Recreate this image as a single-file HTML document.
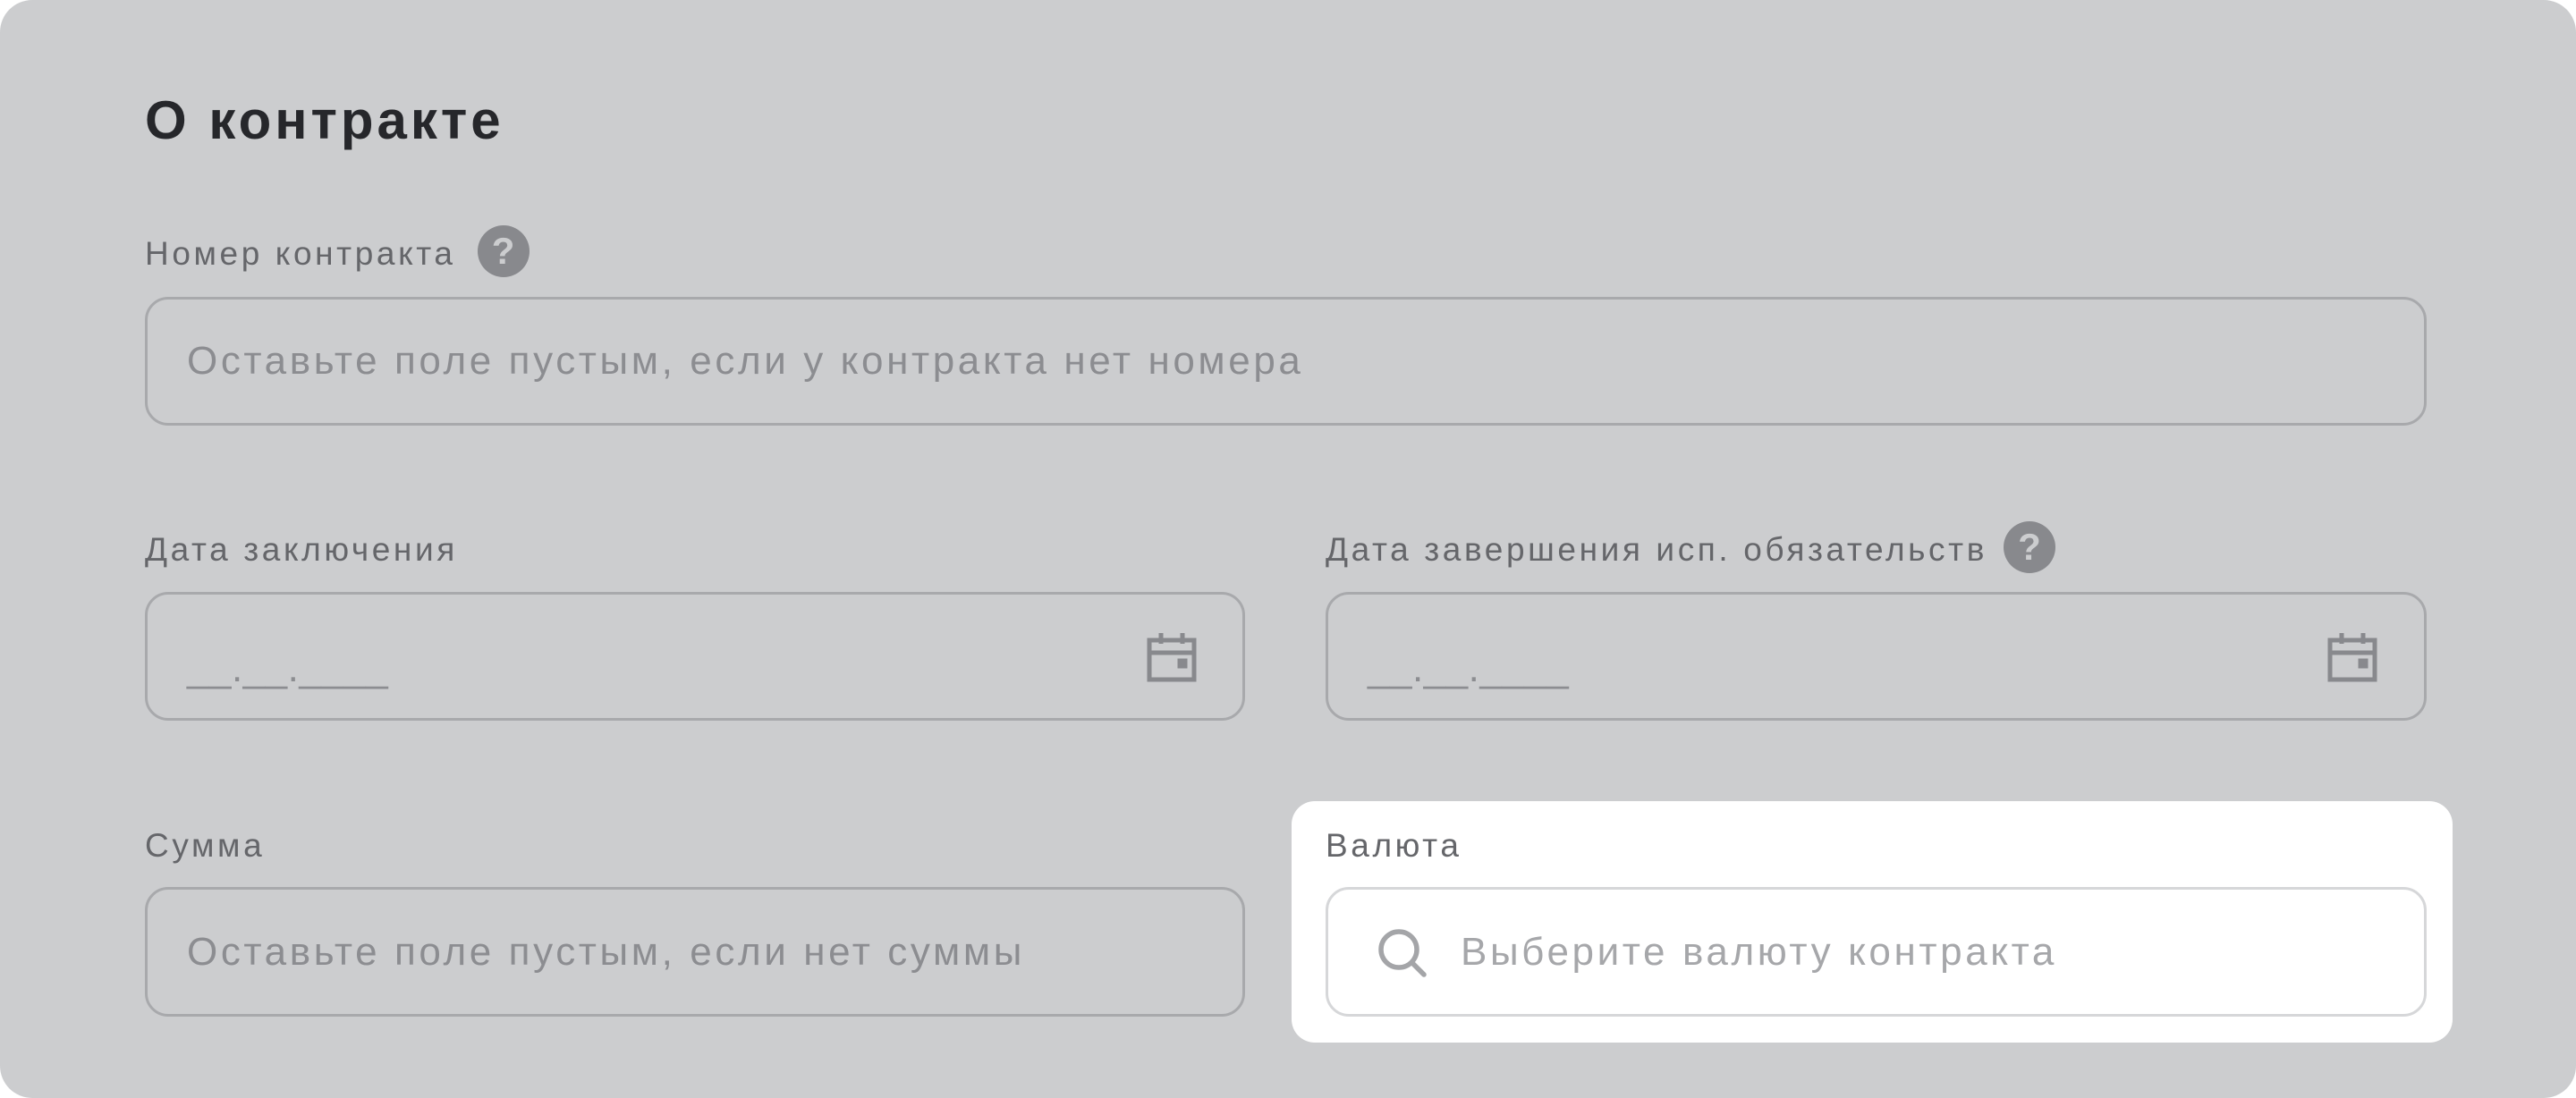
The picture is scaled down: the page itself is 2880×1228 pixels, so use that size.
<!DOCTYPE html>
<html><head><meta charset="utf-8"><style>
*{margin:0;padding:0;box-sizing:border-box}
body{width:2880px;height:1228px;background:#fff;font-family:"Liberation Sans",sans-serif;overflow:hidden;position:relative}
.card{position:absolute;left:0;top:0;width:2880px;height:1228px;background:#cccdcf;border-radius:36px}
.abs{position:absolute}
h1{position:absolute;left:162px;top:100px;font-size:60px;font-weight:bold;color:#26272b;letter-spacing:4px}
.lbl{position:absolute;font-size:37px;color:#65666a;line-height:44px;letter-spacing:3.6px;white-space:nowrap}
.inp{position:absolute;border:3px solid #a8a9ac;border-radius:26px}
.ph{position:absolute;font-size:44px;color:#8c8d91;line-height:52px;letter-spacing:3.6px;white-space:nowrap}
.q{display:inline-block;vertical-align:middle;margin-left:24px;margin-top:-10px;width:58px;height:58px;border-radius:50%;background:#88898d;color:#cccdcf;font-weight:bold;font-size:42px;text-align:center;line-height:58px;letter-spacing:0}
.hl{position:absolute;left:1444px;top:896px;width:1298px;height:270px;background:#fff;border-radius:26px}
</style></head><body>
<div class="card"></div>
<h1>О контракте</h1>
<div class="lbl" style="left:162px;top:262px">Номер контракта<span class="q">?</span></div>
<div class="inp" style="left:162px;top:332px;width:2551px;height:144px"></div>
<div class="ph" style="left:209px;top:378px">Оставьте поле пустым, если у контракта нет номера</div>

<div class="lbl" style="left:162px;top:593px">Дата заключения</div>
<div class="lbl" style="left:1482px;top:593px">Дата завершения исп. обязательств<span class="q" style="margin-left:18px">?</span></div>
<div class="inp" style="left:162px;top:662px;width:1230px;height:144px"></div>
<div class="inp" style="left:1482px;top:662px;width:1231px;height:144px"></div>
<div class="ph" style="left:209px;top:722px;letter-spacing:0.5px">__.__.____</div>
<div class="ph" style="left:1529px;top:722px;letter-spacing:0.5px">__.__.____</div>
<svg class="abs" style="left:1282px;top:706px" width="56" height="58" viewBox="0 0 56 58" fill="none" stroke="#88898d" stroke-width="5"><rect x="3" y="10" width="50" height="44"/><line x1="3" y1="24" x2="53" y2="24"/><line x1="16" y1="2" x2="16" y2="14"/><line x1="40" y1="2" x2="40" y2="14"/><rect x="37" y="33" width="6" height="6" fill="#88898d"/></svg>
<svg class="abs" style="left:2602px;top:706px" width="56" height="58" viewBox="0 0 56 58" fill="none" stroke="#88898d" stroke-width="5"><rect x="3" y="10" width="50" height="44"/><line x1="3" y1="24" x2="53" y2="24"/><line x1="16" y1="2" x2="16" y2="14"/><line x1="40" y1="2" x2="40" y2="14"/><rect x="37" y="33" width="6" height="6" fill="#88898d"/></svg>

<div class="lbl" style="left:162px;top:924px">Сумма</div>
<div class="inp" style="left:162px;top:992px;width:1230px;height:145px"></div>
<div class="ph" style="left:209px;top:1039px">Оставьте поле пустым, если нет суммы</div>

<div class="hl"></div>
<div class="lbl" style="left:1482px;top:924px">Валюта</div>
<div class="inp" style="left:1482px;top:992px;width:1231px;height:145px;border-color:#d6d7d9"></div>
<svg class="abs" style="left:1538px;top:1036px" width="60" height="60" viewBox="0 0 60 60" fill="none" stroke="#a4a5a8" stroke-width="5.5"><circle cx="26" cy="26" r="20"/><line x1="41" y1="41" x2="54" y2="54" stroke-linecap="round"/></svg>
<div class="ph" style="left:1633px;top:1039px;color:#a6a7aa">Выберите валюту контракта</div>
</body></html>
